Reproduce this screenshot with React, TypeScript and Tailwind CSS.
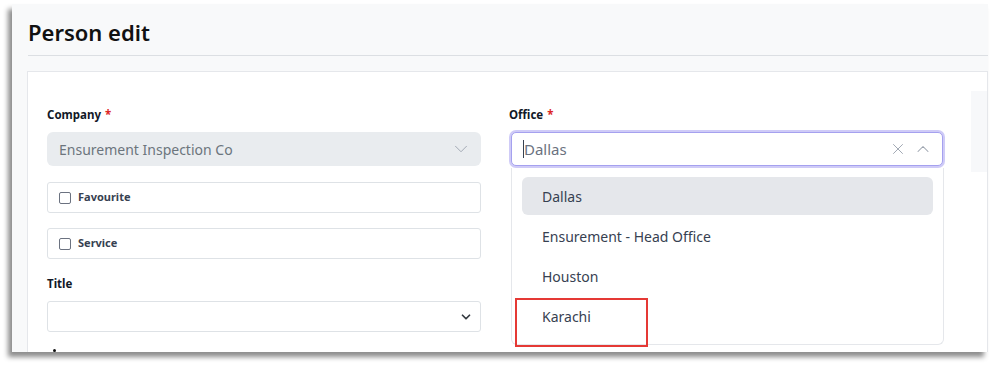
import React from 'react';
import { X, ChevronUp, ChevronDown } from 'lucide-react';

const font = { fontFamily: '"Noto Sans", "Open Sans", sans-serif' };

const Label: React.FC<{ text: string; required?: boolean }> = ({ text, required }) => (
  <div className="h-[18px] text-[11.5px] font-bold leading-[18px] text-[#111827]">
    {text}
    {required && <span className="ml-1 text-[#dc2626]">*</span>}
  </div>
);

const CheckRow: React.FC<{ text: string }> = ({ text }) => (
  <div className="flex h-[31px] items-center gap-[7px] rounded-[3px] border border-[#dee2e6] bg-white px-[11px]">
    <span className="h-[12px] w-[12px] rounded-[2px] border border-[#6b7280] bg-white" />
    <span className="text-[11px] font-bold text-[#374151]">{text}</span>
  </div>
);

const offices = ['Dallas', 'Ensurement - Head Office', 'Houston', 'Karachi'];

export default function App() {
  return (
    <div className="h-[365px] w-[992px] overflow-hidden bg-white" style={font}>
      <div className="ml-[12px] mt-[4px] h-[348px] w-[976px] overflow-hidden bg-[#f8f9fa] shadow-[-4px_5px_5px_rgba(0,0,0,0.45)]">
        <div className="pl-[16px]">
          <h1 className="h-[52px] border-b border-[#dcdfe3] pt-[12px] text-[22px] font-semibold leading-[32px] text-[#111]">
            Person edit
          </h1>
        </div>

        <div className="ml-[15px] mt-[15px] h-[300px] border border-[#e5e7eb] bg-white pl-[19px] pt-[34px]">
          <div className="flex">
            {/* left column */}
            <div className="flex w-[434px] flex-col">
              <Label text="Company" required />
              <div className="mt-[8px] flex h-[34px] items-center justify-between rounded-[6px] bg-[#e9ecef] pl-3 pr-[9px]">
                <span className="text-[14px] text-[#6c757d]">Ensurement Inspection Co</span>
                <ChevronDown size={22} strokeWidth={1} className="text-[#9ca3af]" />
              </div>
              <div className="mt-[16px] flex flex-col gap-[15px]">
                <CheckRow text="Favourite" />
                <CheckRow text="Service" />
              </div>
              <div className="mt-[16px]">
                <Label text="Title" />
              </div>
              <div className="mt-[8px] flex h-[31px] items-center justify-end rounded-[3px] border border-[#dee2e6] bg-white pr-[7px]">
                <ChevronDown size={14} strokeWidth={3} className="text-[#343a40]" />
              </div>
              <div className="mt-[17px] pl-[6px]">
                <span className="block h-[3px] w-[3px] rounded-full bg-[#111]" />
              </div>
            </div>

            {/* right column */}
            <div className="relative ml-[28px] flex w-[436px] flex-col">
              <Label text="Office" required />
              <div className="mt-[6px] rounded-[7px] bg-[#cfcbf7] p-[2px]">
                <div className="flex h-[34px] items-center justify-between rounded-[5px] border border-[#a5a1ef] bg-white pl-[11px] pr-[9px]">
                  <span className="flex items-center text-[15px] text-[#6b7280]">
                    <span className="h-[18px] w-px bg-[#374151]" />
                    Dallas
                  </span>
                  <span className="flex items-center gap-[6px] text-[#9ca3af]">
                    <X size={18} strokeWidth={1.25} />
                    <ChevronUp size={20} strokeWidth={1.25} />
                  </span>
                </div>
              </div>
              <div className="mt-[16px] h-[26px] ml-[121px] mr-[22px] border-t border-[#cfd3d8]" />

              {/* dropdown menu */}
              <div className="absolute left-[2px] right-[1px] top-[62px] z-10 flex h-[177px] flex-col gap-[2px] rounded-b-[6px] border border-t-0 border-[#e5e7eb] bg-white px-[10px] pt-[9px]">
                {offices.map((o, i) => (
                  <div
                    key={o}
                    className={`flex h-[38px] items-center rounded-[6px] pl-[20px] text-[14px] text-[#374151] ${i === 0 ? 'bg-[#e5e7eb]' : ''}`}
                  >
                    {o}
                  </div>
                ))}
              </div>

              {/* annotation */}
              <div className="absolute left-[6px] top-[192px] z-20 h-[49px] w-[133px] border-2 border-[#e53935]" />
            </div>

            {/* side panel */}
            <div className="ml-[26px] mt-[-15px] h-[81px] flex-1 bg-[#f7f8fa]" />
          </div>
        </div>
      </div>
    </div>
  );
}
